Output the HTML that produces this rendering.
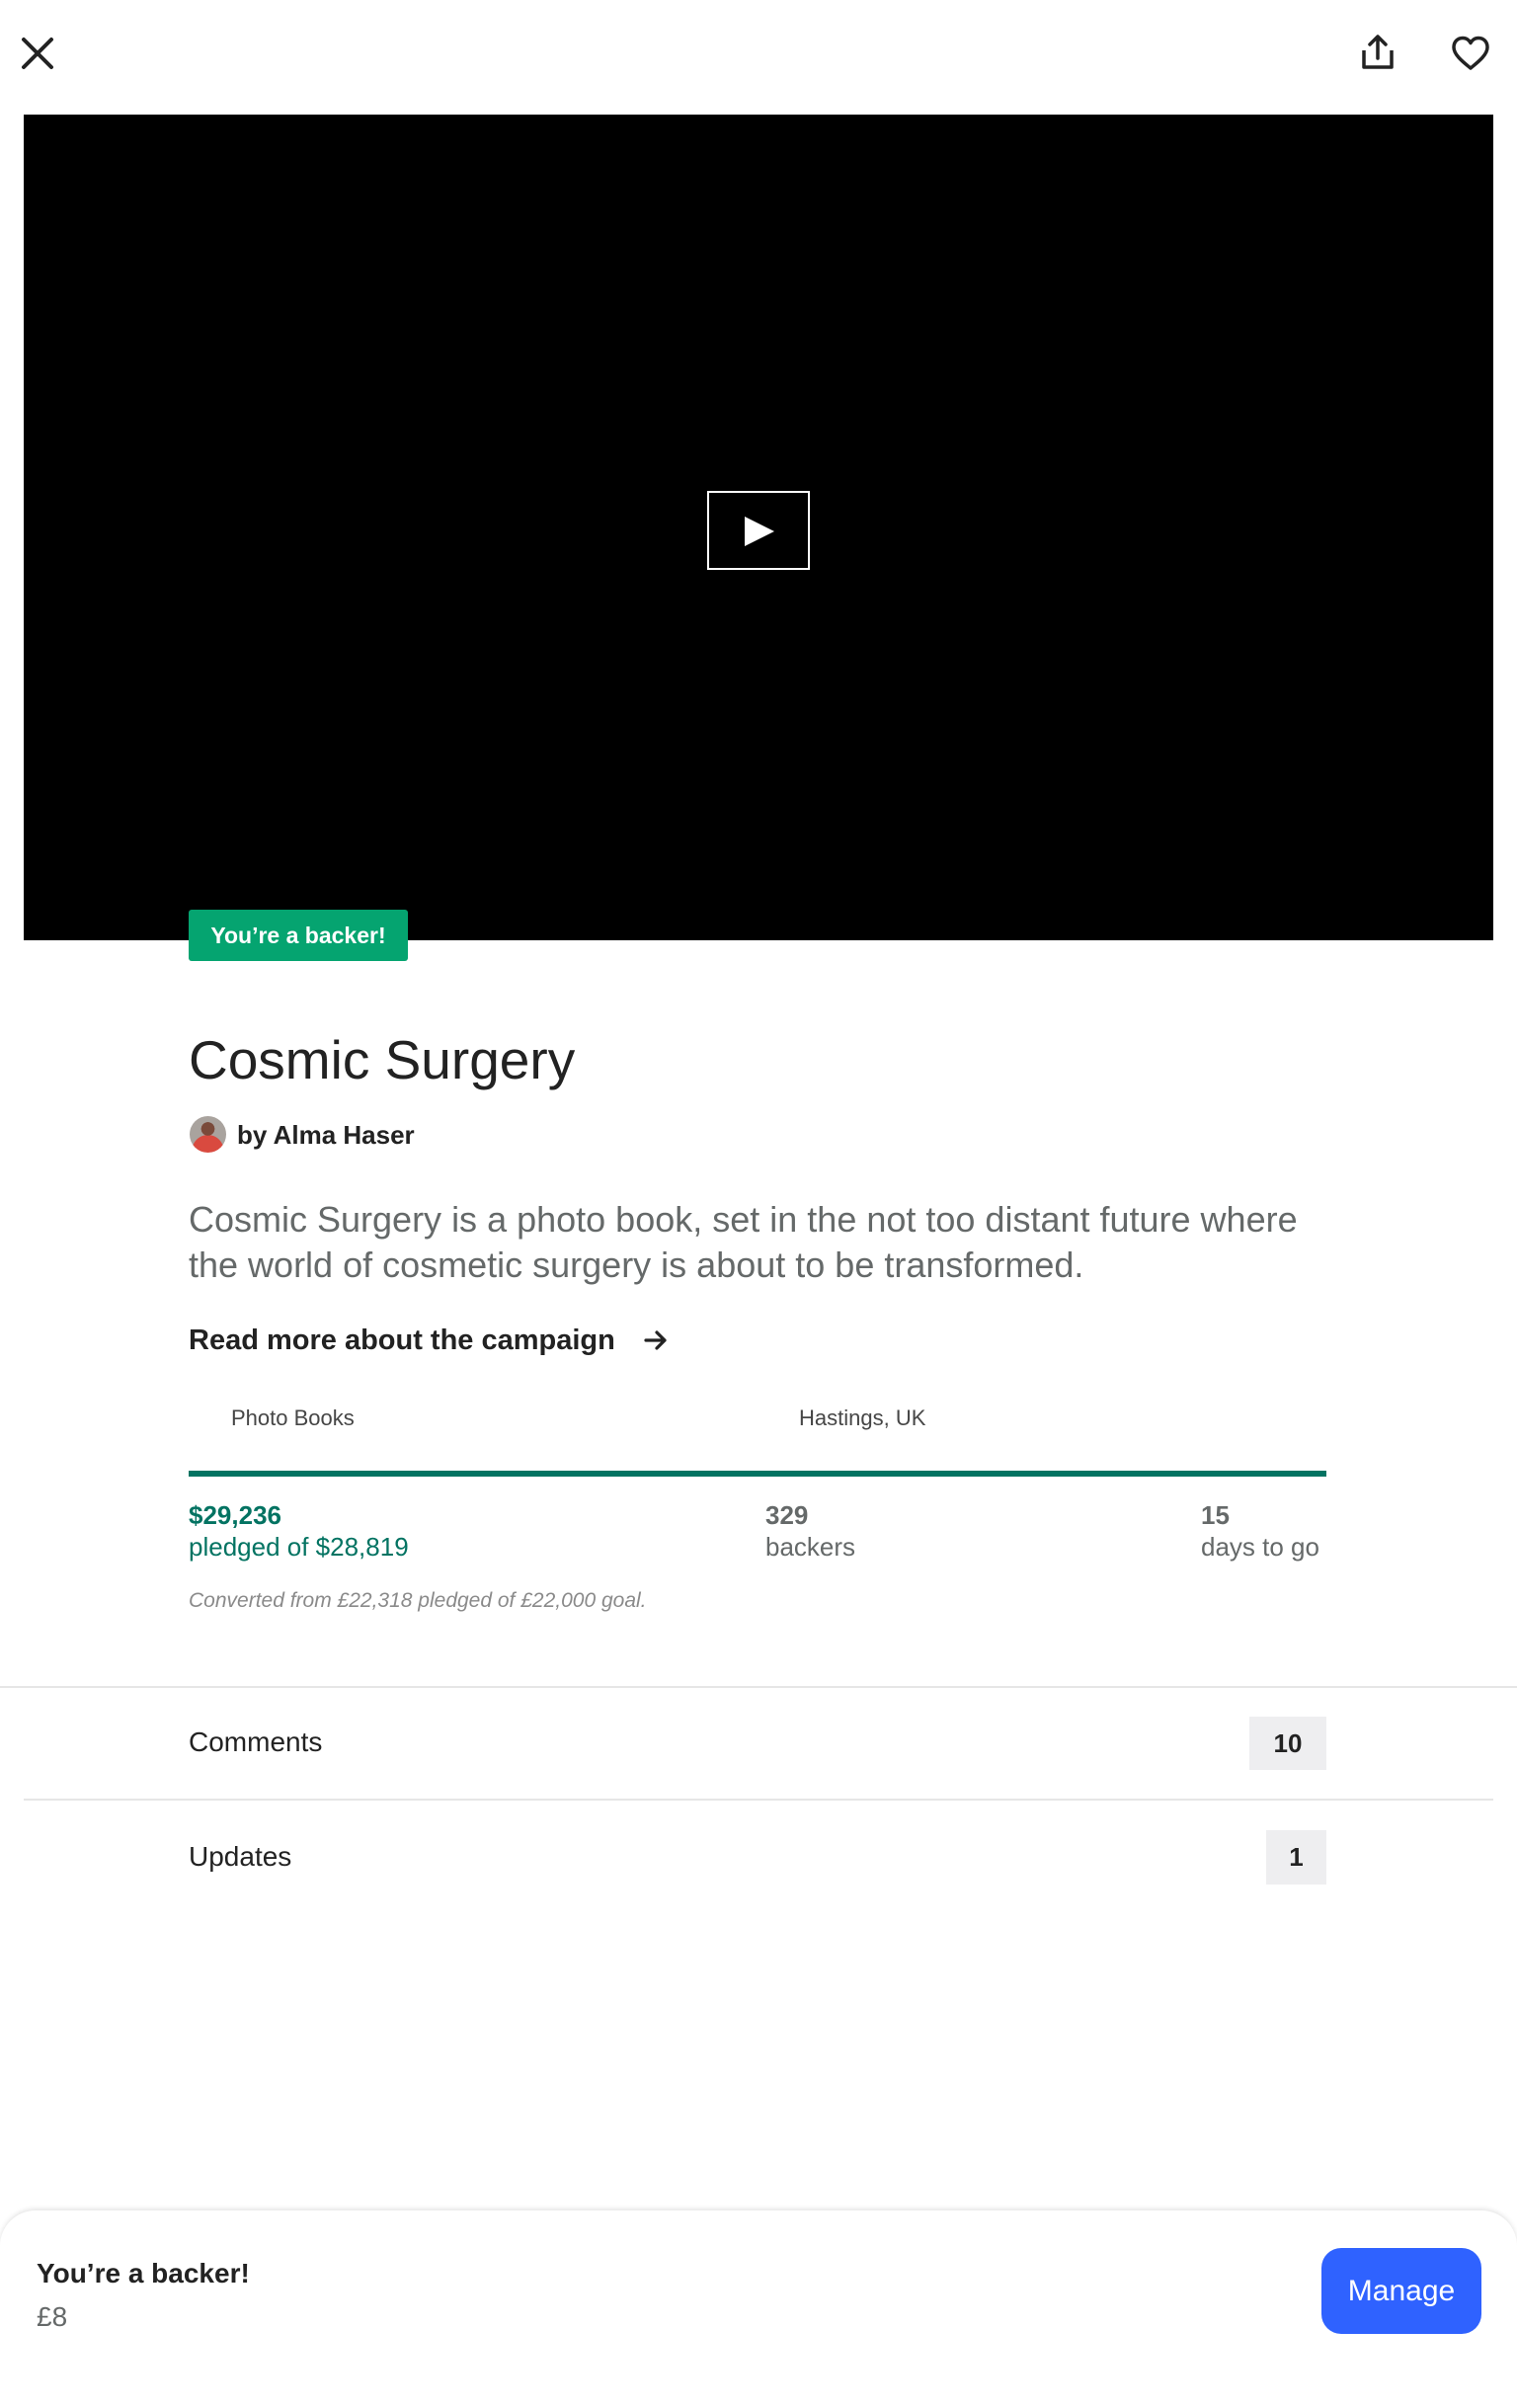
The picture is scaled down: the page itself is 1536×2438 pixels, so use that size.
<!DOCTYPE html>
<html><head><meta charset="utf-8"><style>
*{margin:0;padding:0;box-sizing:border-box}
body{width:1536px;height:2400px;background:#fff;position:relative;overflow:hidden;font-family:"Liberation Sans",sans-serif;color:#222}
.a{position:absolute;white-space:nowrap}
</style></head><body>
<svg class="a" style="left:21px;top:37px" width="34" height="34" viewBox="0 0 34 34"><path d="M3 3L31 31M31 3L3 31" stroke="#222" stroke-width="4" stroke-linecap="round"/></svg>
<svg class="a" style="left:1377px;top:34px" width="36" height="38" viewBox="0 0 36 38"><path d="M18 25V4M10 11L18 3L26 11" fill="none" stroke="#222" stroke-width="3.5" stroke-linecap="round" stroke-linejoin="round"/><path d="M4 17V34H32V17" fill="none" stroke="#222" stroke-width="3.5" stroke-linejoin="round"/></svg>
<svg class="a" style="left:1469px;top:36px" width="40" height="36" viewBox="0 0 40 36"><path d="M20 33C14 28 3 20 3 12C3 6 7 2.5 12 2.5C15.5 2.5 18.5 4.5 20 7.5C21.5 4.5 24.5 2.5 28 2.5C33 2.5 37 6 37 12C37 20 26 28 20 33Z" fill="none" stroke="#222" stroke-width="3.5" stroke-linejoin="round"/></svg>
<div class="a" style="left:24px;top:116px;width:1488px;height:836px;background:#000"></div>
<div class="a" style="left:716px;top:497px;width:104px;height:80px;border:2px solid #fff"></div>
<svg class="a" style="left:752px;top:522px" width="34" height="32" viewBox="0 0 34 32"><path d="M2 1L32 16L2 31Z" fill="#fff"/></svg>
<div class="a" style="left:191px;top:921px;width:222px;height:52px;background:#05a470;border-radius:3px;color:#fff;font-weight:bold;font-size:23px;line-height:52px;text-align:center">You’re a backer!</div>
<div class="a" style="left:191px;top:1038px;font-size:55px;line-height:70px;color:#222">Cosmic Surgery</div>
<div class="a" style="left:192px;top:1130px;width:37px;height:37px;border-radius:50%;background:radial-gradient(circle at 50% 35%,#7a4a3a 0 22%,transparent 23%),radial-gradient(circle at 50% 95%,#d94a3f 0 40%,#a9a39e 41%)"></div>
<div class="a" style="left:240px;top:1131px;font-size:26px;line-height:36px;font-weight:bold;color:#222">by Alma Haser</div>
<div class="a" style="left:191px;top:1212px;font-size:36px;line-height:46px;color:#656969;white-space:normal;width:1160px">Cosmic Surgery is a photo book, set in the not too distant future where the world of cosmetic surgery is about to be transformed.</div>
<div class="a" style="left:191px;top:1338px;font-size:29px;line-height:38px;font-weight:bold;color:#222">Read more about the campaign</div>
<svg class="a" style="left:652px;top:1346px" width="24" height="22" viewBox="0 0 24 22"><path d="M2 11H21M13 3L21 11L13 19" fill="none" stroke="#222" stroke-width="3.2" stroke-linecap="round" stroke-linejoin="round"/></svg>
<div class="a" style="left:234px;top:1421px;font-size:22px;line-height:30px;color:#464646">Photo Books</div>
<div class="a" style="left:809px;top:1421px;font-size:22px;line-height:30px;color:#464646">Hastings, UK</div>
<div class="a" style="left:191px;top:1489px;width:1152px;height:6px;background:#037362"></div>
<div class="a" style="left:191px;top:1518px;font-size:26px;line-height:32px;color:#037362"><b>$29,236</b><br>pledged of $28,819</div>
<div class="a" style="left:775px;top:1518px;font-size:26px;line-height:32px;color:#656969"><b>329</b><br>backers</div>
<div class="a" style="left:1216px;top:1518px;font-size:26px;line-height:32px;color:#656969"><b>15</b><br>days to go</div>
<div class="a" style="left:191px;top:1607px;font-size:21px;line-height:28px;font-style:italic;color:#8a8a8a">Converted from £22,318 pledged of £22,000 goal.</div>
<div class="a" style="left:0;top:1707px;width:1536px;height:2px;background:#e6e6e6"></div>
<div class="a" style="left:191px;top:1746px;font-size:28px;line-height:36px;color:#222">Comments</div>
<div class="a" style="left:1265px;top:1738px;width:78px;height:54px;background:#eeeef0;font-size:26px;line-height:54px;text-align:center;font-weight:bold;color:#222">10</div>
<div class="a" style="left:24px;top:1821px;width:1488px;height:2px;background:#e6e6e6"></div>
<div class="a" style="left:191px;top:1862px;font-size:28px;line-height:36px;color:#222">Updates</div>
<div class="a" style="left:1282px;top:1853px;width:61px;height:55px;background:#eeeef0;font-size:26px;line-height:55px;text-align:center;font-weight:bold;color:#222">1</div>
<div class="a" style="left:0;top:2238px;width:1536px;height:200px;background:#fff;border-radius:36px 36px 0 0;box-shadow:0 -2px 5px rgba(0,0,0,0.1)"></div>
<div class="a" style="left:37px;top:2284px;font-size:28px;line-height:36px;font-weight:bold;color:#222">You’re a backer!</div>
<div class="a" style="left:37px;top:2328px;font-size:28px;line-height:36px;color:#656969">£8</div>
<div class="a" style="left:1338px;top:2276px;width:162px;height:87px;background:#2f62ff;border-radius:20px;color:#fff;font-size:30px;line-height:87px;text-align:center">Manage</div>
</body></html>
